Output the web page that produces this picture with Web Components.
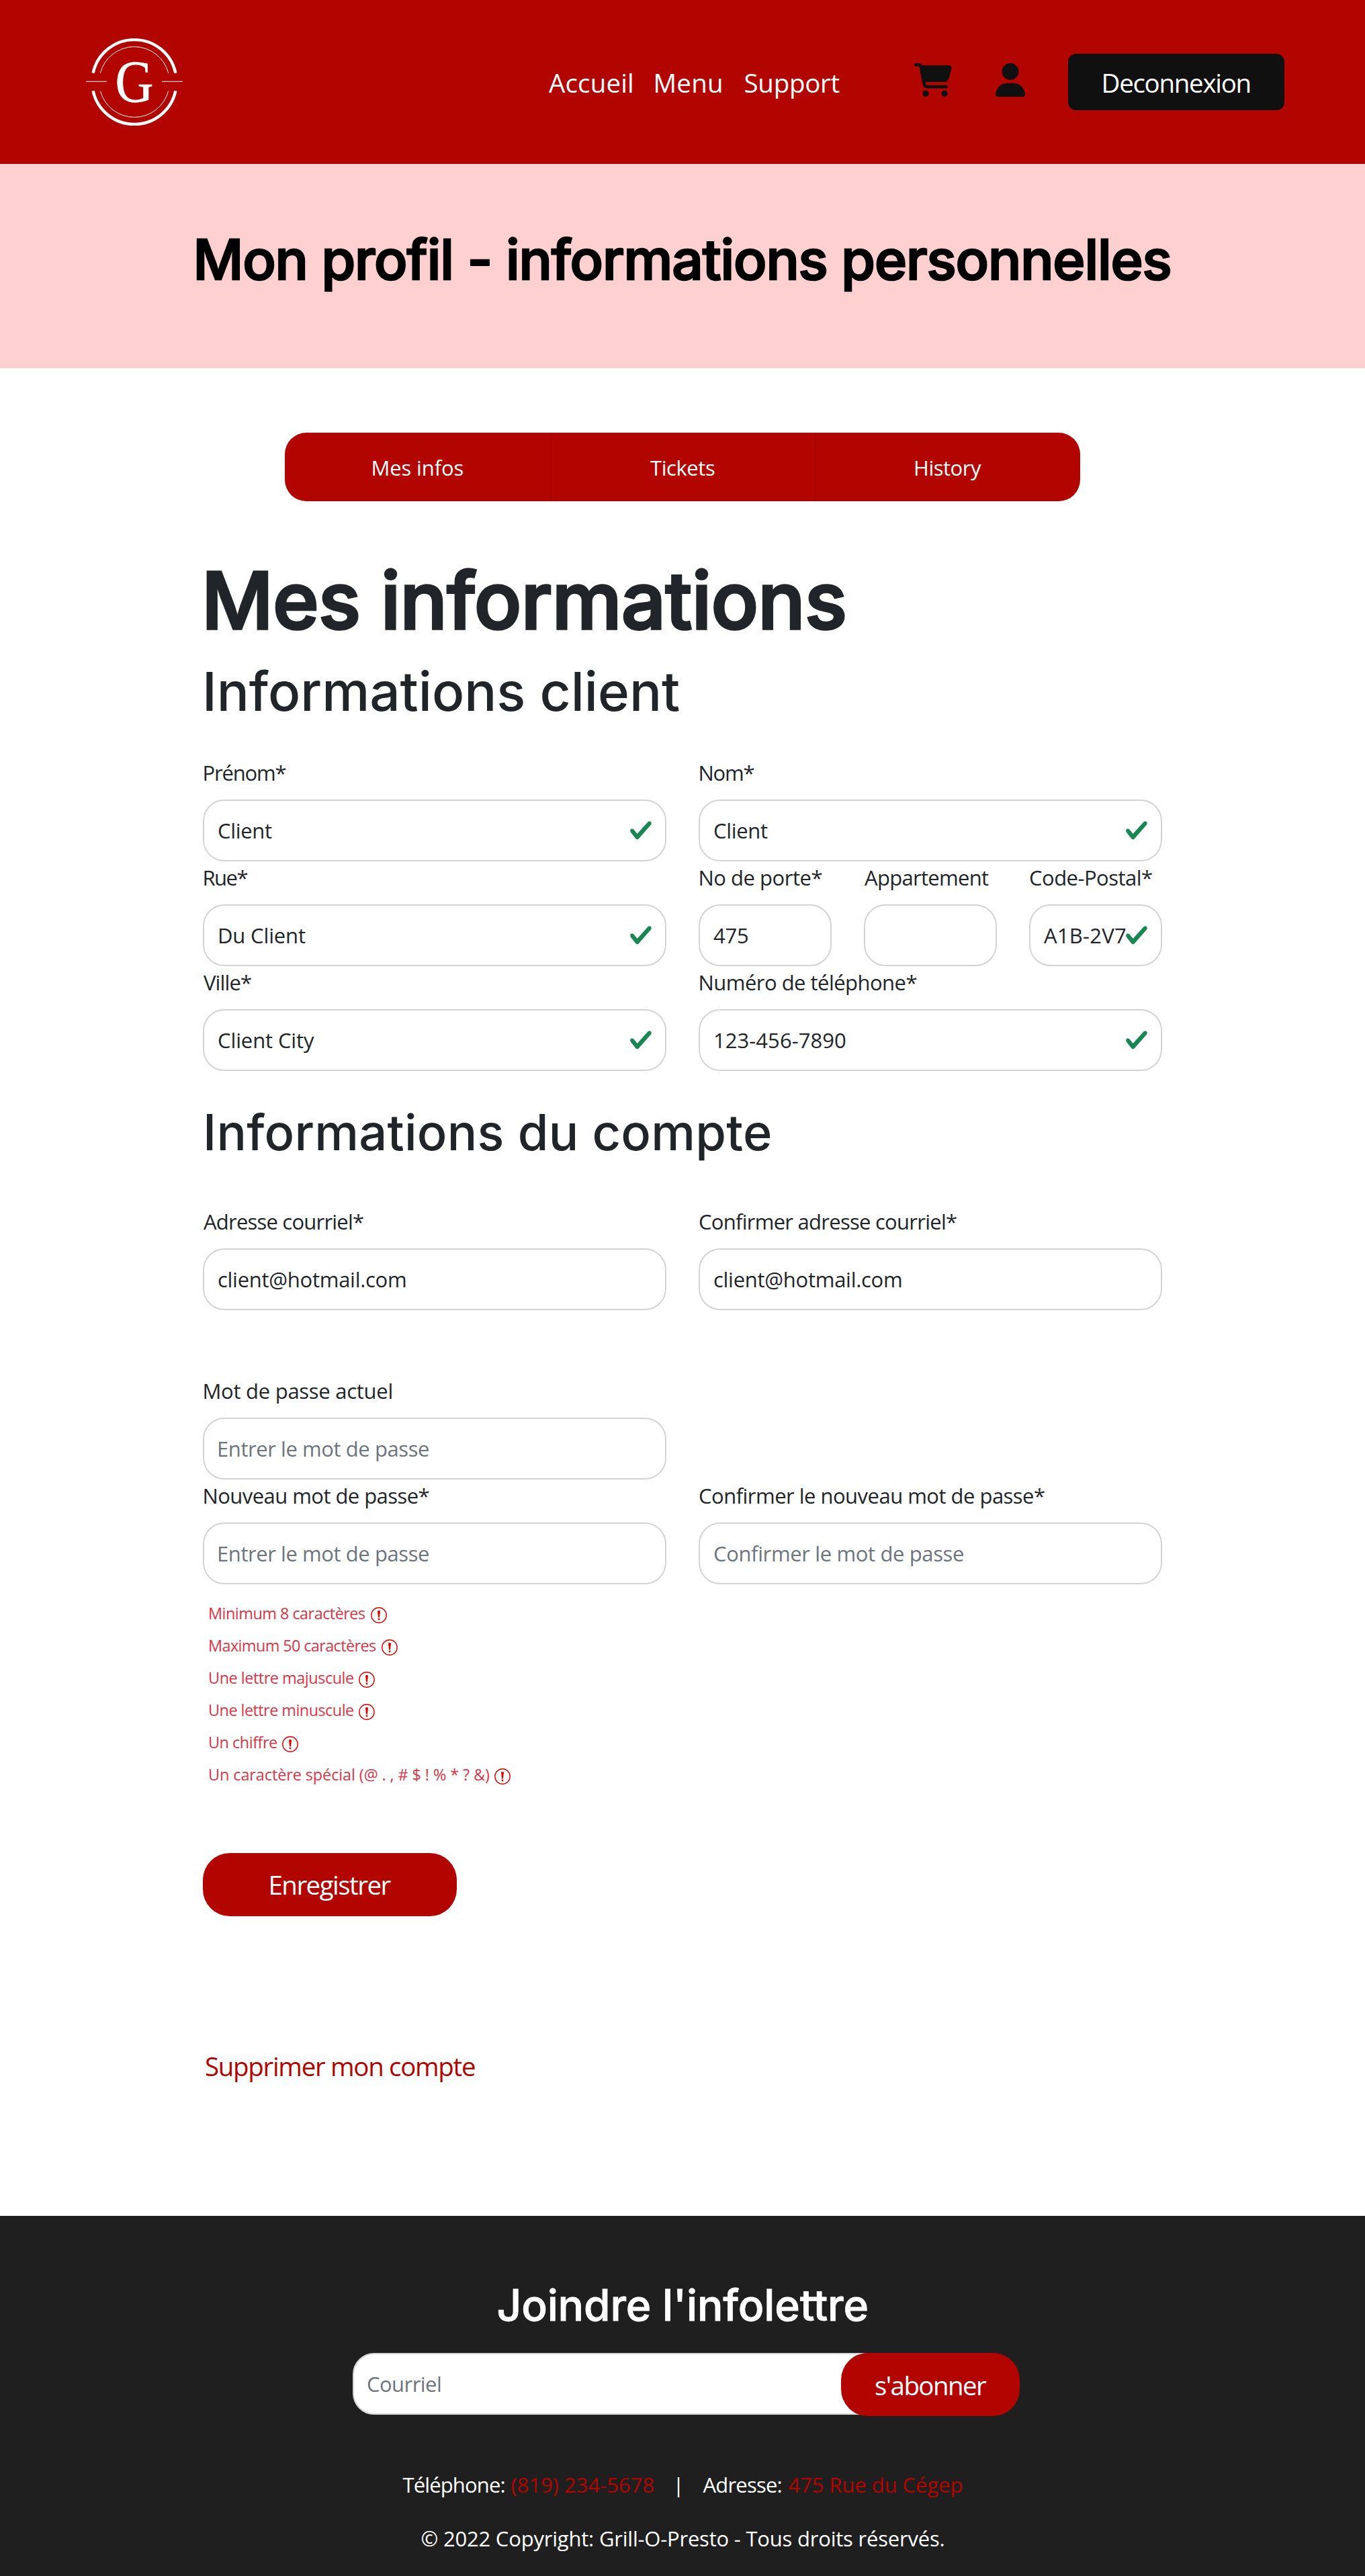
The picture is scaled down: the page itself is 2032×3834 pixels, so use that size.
<!DOCTYPE html>
<html lang="fr">
<head>
<meta charset="utf-8">
<title>Grill-O-Presto - Mon profil</title>
<style>
  body { margin: 0; width: 2032px; background: #fff; color: #212529; font: 400 31px/48px "Open Sans", "Noto Sans", sans-serif; }
  main { display: flex; flex-direction: column; padding: 96px 302px 194px; }
  h1, h2 { font-family: Inter, sans-serif; margin: 0; display: flex; white-space: nowrap; }
  h1 { font-size: 117px; line-height: 144px; font-weight: 500; -webkit-text-stroke: 3.6px #212529; margin-top: 76px; }
  .client { font-size: 80px; line-height: 96px; font-weight: 500; margin: 15px 0 49px; }
  .compte { font-size: 74px; line-height: 88px; font-weight: 500; margin: 47px 0 65px; }
  .grid { display: grid; grid-template-columns: 1fr 1fr; column-gap: 48px; }
  .trio { display: grid; grid-template-columns: repeat(3, 1fr); column-gap: 48px; }
  .passwords { margin-top: 96px; }
  .rules { display: flex; flex-direction: column; margin-top: 19px; padding-left: 9px; }
  .save { margin-top: 93px; width: 378px; }
  .delete { display: flex; margin-top: 194px; padding-left: 4px; font-size: 38.5px; line-height: 58px; color: #b20500; text-decoration: none; }
</style>
</head>
<body>
<site-header></site-header>
<page-banner><fit-text w="1448">Mon profil - informations personnelles</fit-text></page-banner>
<main>
  <tab-bar></tab-bar>
  <h1><fit-text w="947" dx="7">Mes informations</fit-text></h1>
  <h2 class="client"><fit-text w="704" dx="5">Informations client</fit-text></h2>
  <section class="grid">
    <text-field label="Prénom*" lw="121" value="Client" vw="80" valid></text-field>
    <text-field label="Nom*" lw="80" value="Client" vw="80" valid></text-field>
    <text-field label="Rue*" lw="64" value="Du Client" vw="128" vdx="3" valid></text-field>
    <div class="trio">
      <text-field label="No de porte*" lw="181" value="475" vw="51" vdx="0"></text-field>
      <text-field label="Appartement" lw="185" ldx="1"></text-field>
      <text-field label="Code-Postal*" lw="182" ldx="1" value="A1B-2V7" vw="122" vdx="0" valid></text-field>
    </div>
    <text-field label="Ville*" lw="71" ldx="1" value="Client City" vw="143" valid></text-field>
    <text-field label="Numéro de téléphone*" lw="322" value="123-456-7890" vw="195" vdx="2" valid></text-field>
  </section>
  <h2 class="compte"><fit-text w="840" dx="5">Informations du compte</fit-text></h2>
  <section class="grid">
    <text-field label="Adresse courriel*" lw="238" ldx="1" value="client@hotmail.com" vw="279"></text-field>
    <text-field label="Confirmer adresse courriel*" lw="383" ldx="1" value="client@hotmail.com" vw="279"></text-field>
  </section>
  <section class="grid passwords">
    <text-field label="Mot de passe actuel" lw="279" placeholder="Entrer le mot de passe" vw="312" vdx="2"></text-field>
    <span></span>
    <text-field label="Nouveau mot de passe*" lw="334" placeholder="Entrer le mot de passe" vw="312" vdx="2"></text-field>
    <text-field label="Confirmer le nouveau mot de passe*" lw="514" ldx="1" placeholder="Confirmer le mot de passe" vw="371"></text-field>
  </section>
  <div class="rules">
    <rule-item text="Minimum 8 caractères" w="232"></rule-item>
    <rule-item text="Maximum 50 caractères" w="248"></rule-item>
    <rule-item text="Une lettre majuscule" w="214"></rule-item>
    <rule-item text="Une lettre minuscule" w="214"></rule-item>
    <rule-item text="Un chiffre" w="100"></rule-item>
    <rule-item text="Un caractère spécial (@ . , # $ ! % * ? &amp;)" w="416"></rule-item>
  </div>
  <pill-button class="save"><fit-text w="180" dx="3">Enregistrer</fit-text></pill-button>
  <a class="delete"><fit-text w="401">Supprimer mon compte</fit-text></a>
</main>
<site-footer></site-footer>
<script>
const define = (name, render) => customElements.define(name, class extends HTMLElement {
  connectedCallback() {
    if (this.shadowRoot) return;
    this.attachShadow({ mode: "open" }).innerHTML = render(this);
  }
});
const attr = (el, name, fallback = "") => el.getAttribute(name) ?? fallback;
const esc = s => s.replace(/&/g, "&amp;").replace(/</g, "&lt;");

define("site-header", () => `
  <style>
    :host { display: flex; align-items: flex-start; height: 244px; background: #b20500; color: #fff; font-size: 38.5px; line-height: 60px; box-sizing: border-box; }
    .logo { margin: 52px 0 0 124px; width: 152px; height: 140px; flex: none; }
    nav { display: flex; gap: 34.5px; margin: 93px 0 0 541px; }
    .cart { margin: 94px 0 0 111px; width: 56px; height: 50px; flex: none; }
    .user { margin: 94px 0 0 65px; width: 44px; height: 50px; flex: none; }
    .logout { display: flex; justify-content: center; box-sizing: border-box; width: 322px; height: 84px; margin: 80px 0 0 64px; padding-top: 13px; border-radius: 12px; background: #101010; }
  </style>
  <svg class="logo" viewBox="124 52 152 140" fill="none" stroke="#fff">
    <g stroke-width="4.4">
      <path d="M138.6 108.7A62.8 62.8 0 0 1 261.4 108.7"/>
      <path d="M138.6 135.3A62.8 62.8 0 0 0 261.4 135.3"/>
    </g>
    <g stroke-width="1">
      <path d="M149.3 108.7A52.4 52.4 0 0 1 250.7 108.7"/>
      <path d="M149.3 135.3A52.4 52.4 0 0 0 250.7 135.3"/>
      <path d="M128 121.3H159M241 121.3H272"/>
    </g>
    <text x="171.5" y="150.5" fill="#fff" stroke="#fff" stroke-width=".6" font-family="Liberation Serif" font-size="88" textLength="57" lengthAdjust="spacingAndGlyphs">G</text>
  </svg>
  <nav><fit-text w="124">Accueil</fit-text><fit-text w="98.500">Menu</fit-text><fit-text w="141">Support</fit-text></nav>
  <svg class="cart" viewBox="0 0 576 512" fill="#101010"><path d="M0 24C0 10.700 10.700 0 24 0H69.500c22 0 41.500 12.800 50.600 32h411c26.300 0 45.500 25 38.600 50.400l-41 152.300c-8.500 31.400-37 53.300-69.500 53.300H170.700l5.400 28.500c2.200 11.300 12.100 19.500 23.600 19.500H488c13.300 0 24 10.700 24 24s-10.700 24-24 24H199.700c-34.600 0-64.300-24.600-70.700-58.500L77.400 54.500c-.7-3.800-4-6.500-7.900-6.500H24C10.700 48 0 37.300 0 24zM128 464a48 48 0 1 1 96 0 48 48 0 1 1-96 0zm336-48a48 48 0 1 1 0 96 48 48 0 1 1 0-96z"/></svg>
  <svg class="user" viewBox="0 0 448 512" fill="#101010"><path d="M224 256A128 128 0 1 0 224 0a128 128 0 1 0 0 256zm-45.700 48C79.800 304 0 383.800 0 482.300 0 498.700 13.300 512 29.700 512H418.300c16.400 0 29.700-13.300 29.700-29.700C448 383.800 368.200 304 269.700 304H178.300z"/></svg>
  <div class="logout"><fit-text w="218" dx="2">Deconnexion</fit-text></div>`);

define("page-banner", () => `
  <style>
    :host { display: flex; justify-content: center; box-sizing: border-box; height: 304px; padding-top: 93px; padding-left: 3px; background: #ffd0d0; color: #000; font: 500 82px/100px Inter, sans-serif; -webkit-text-stroke: 2.6px #000; white-space: nowrap; }
  </style><slot></slot>`);

define("tab-bar", () => `
  <style>
    :host { display: grid; grid-template-columns: 395px 394px 395px; align-self: center; width: 1184px; height: 102px; border-radius: 32px; background: #b20500; color: #fff; overflow: hidden; }
    div { display: flex; justify-content: center; padding-top: 28px; }
    div + div { border-left: 2px solid #a50500; }
  </style>
  <div><fit-text w="134" dx="2">Mes infos</fit-text></div>
  <div><fit-text w="96" rx="2">Tickets</fit-text></div>
  <div><fit-text w="98" dx="1">History</fit-text></div>`);

define("text-field", el => {
  const value = attr(el, "value"), hint = attr(el, "placeholder");
  const shown = value || hint;
  return `
  <style>
    :host { display: flex; flex-direction: column; min-width: 0; }
    label { display: flex; height: 48px; margin-bottom: 16px; white-space: nowrap; }
    .box { display: flex; align-items: center; justify-content: space-between; box-sizing: border-box; height: 92px; padding: 0 18px 0 20px; border: 2px solid #d4d4d4; border-radius: 32px; background: #fff; white-space: nowrap; }
    .value { display: flex; height: 48px; width: 0; }
    .hint { color: #6c757d; }
    svg { width: 36px; height: 36px; flex: none; }
  </style>
  <label><fit-text w="${attr(el, "lw")}" dx="${attr(el, "ldx", 2.5)}">${esc(attr(el, "label"))}</fit-text></label>
  <div class="box"><span class="value ${value ? "" : "hint"}">${shown ? `<fit-text w="${attr(el, "vw")}" dx="${attr(el, "vdx", 1)}">${esc(shown)}</fit-text>` : ""}</span>${el.hasAttribute("valid") ? `<svg viewBox="0 0 8 8"><path fill="#198754" d="M2.3 6.73L.6 4.53c-.4-1.040.46-1.400 1.100-.8l1.100 1.400 3.400-3.800c.6-.63 1.600-.27 1.200.7l-4 4.600c-.43.5-.8.4-1.100.1z"/></svg>` : ""}</div>`;
});

define("rule-item", el => `
  <style>
    :host { display: flex; height: 48px; gap: 8px; color: #dc3545; font-size: 23.5px; white-space: nowrap; }
    svg { width: 24px; height: 24px; margin-top: 15px; }
  </style>
  <fit-text w="${attr(el, "w")}" dx="1">${esc(attr(el, "text"))}</fit-text>
  <svg viewBox="0 0 24 24"><circle cx="12" cy="12" r="11.200" fill="none" stroke="#e60000" stroke-width="1.400"/><path fill="#e60000" d="M10 6.200Q10 5 12 5t2 1.200L12.900 15.500h-1.800z"/><circle cx="12" cy="18" r="1.400" fill="#e60000"/></svg>`);

define("pill-button", () => `
  <style>
    :host { display: flex; justify-content: center; box-sizing: border-box; height: 94px; padding-top: 17px; border-radius: 40px; background: #b20500; color: #fff; font-size: 38.5px; line-height: 60px; white-space: nowrap; }
  </style><slot></slot>`);

define("site-footer", () => `
  <style>
    :host { display: flex; flex-direction: column; align-items: center; box-sizing: border-box; height: 536px; padding-top: 94px; background: #1f1f1f; color: #fff; white-space: nowrap; }
    h3 { display: flex; margin: 0 0 33px; font: 500 64px/77px Inter, sans-serif; -webkit-text-stroke: .8px #fff; }
    form { display: flex; width: 993px; margin-left: 11px; height: 94px; }
    .mail { display: flex; box-sizing: border-box; width: 790px; height: 92px; padding: 20px 0 0 20px; border: 2px solid #d4d4d4; border-radius: 32px; background: #fff; color: #6c757d; }
    pill-button { width: 266px; margin-left: -63px; padding-top: 18px; }
    .contact { display: flex; margin-top: 78px; }
    .contact span { display: flex; gap: 11px; }
    .red { color: #b20500; }
    .copy { display: flex; margin-top: 32px; }
  </style>
  <h3><fit-text w="549">Joindre l'infolettre</fit-text></h3>
  <form><div class="mail"><fit-text w="109">Courriel</fit-text></div><pill-button><fit-text w="166" dx="2">s'abonner</fit-text></pill-button></form>
  <div class="contact"><span><fit-text w="151">Téléphone:</fit-text><fit-text class="red" w="212">(819) 234-5678</fit-text></span><fit-text dx="35" rx="35">|</fit-text><span><fit-text w="116">Adresse:</fit-text><fit-text class="red" w="259">475 Rue du Cégep</fit-text></span></div>
  <div class="copy"><fit-text w="777">© 2022 Copyright: Grill-O-Presto - Tous droits réservés.</fit-text></div>`);

/* Tracks its text so that the inked part is exactly w pixels wide, starting dx pixels in. */
const pen = document.createElement("canvas").getContext("2d");
customElements.define("fit-text", class extends HTMLElement {
  connectedCallback() {
    if (this.shadowRoot) return;
    this.attachShadow({ mode: "open" }).innerHTML =
      `<style>:host { display: block; flex: none; white-space: nowrap; font-variant-ligatures: none; }</style><slot></slot>`;
    const text = this.textContent, n = [...text].length;
    const cs = getComputedStyle(this);
    pen.font = `${cs.fontWeight} ${cs.fontSize} ${cs.fontFamily}`;
    const m = pen.measureText(text);
    const left = -m.actualBoundingBoxLeft, right = m.width - m.actualBoundingBoxRight;
    const range = document.createRange();
    range.selectNodeContents(this);
    const ink = range.getBoundingClientRect().width - left - right;
    const track = n > 1 ? (Number(attr(this, "w")) - ink) / (n - 1) : 0;
    this.style.letterSpacing = track + "px";
    this.style.marginLeft = Number(attr(this, "dx", 0)) - left + "px";
    this.style.marginRight = Number(attr(this, "rx", 0)) - right - track + "px";
  }
});
</script>
</body>
</html>
